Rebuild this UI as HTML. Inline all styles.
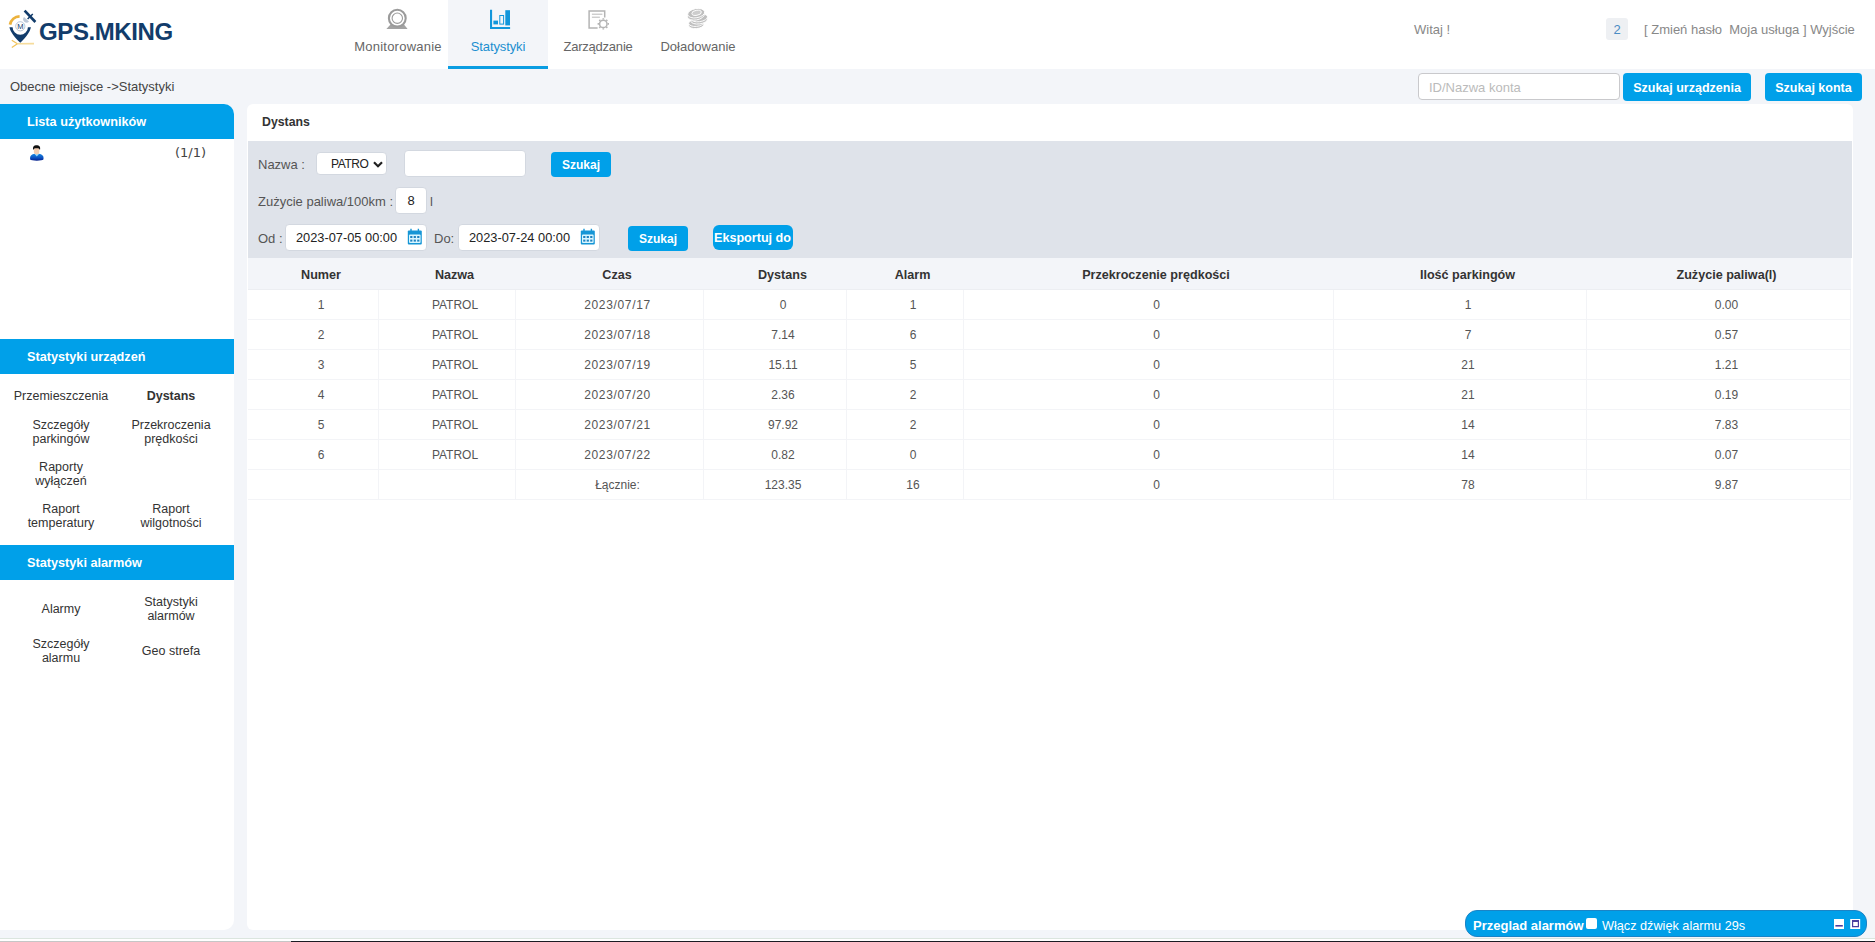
<!DOCTYPE html>
<html lang="pl">
<head>
<meta charset="utf-8">
<title>GPS.MKING - Statystyki</title>
<style>
*{box-sizing:border-box;margin:0;padding:0}
html,body{width:1875px;height:942px;overflow:hidden}
body{background:#f3f5f9;font-family:"Liberation Sans",sans-serif;font-size:13px;color:#333;position:relative}
.abs{position:absolute}
#header{position:absolute;left:0;top:0;width:1875px;height:69px;background:#fff}
.nav{position:absolute;top:0;height:69px;text-align:center;color:#666;font-size:13px}
.nav span{position:absolute;left:0;right:0;top:39px;line-height:16px}
.nav.on{background:#f3f5f9;border-bottom:3px solid #0a9de2;color:#1b8fd0}
.nav svg{position:absolute;top:6px;left:50%;margin-left:-13px}
#crumb{position:absolute;left:10px;top:79px;line-height:16px;font-size:13px;color:#444}
.btn{position:absolute;background:#00a0e9;color:#fff;font-weight:bold;border-radius:4px;text-align:center;font-size:12px}
#left{position:absolute;left:0;top:104px;width:234px;height:826px;background:#fff;border-radius:0 10px 10px 0;overflow:hidden}
.lh{position:absolute;left:0;width:234px;height:35px;background:#00a0e9;color:#fff;font-weight:bold;font-size:12.7px;line-height:37px;padding-left:27px}
.li{position:absolute;margin-top:1px;width:110px;text-align:center;font-size:12.5px;line-height:13.5px;color:#333}
#main{position:absolute;left:247px;top:104px;width:1606px;height:826px;background:#fff;border-radius:6px;overflow:hidden}
#filter{position:absolute;left:1px;top:37px;width:1604px;height:117px;background:#dfe3ea}
.lbl{position:absolute;font-size:13px;color:#555;line-height:16px}
.inp{position:absolute;background:#fff;border:1px solid #d3d8e0;border-radius:4px;font-size:12px;color:#222;line-height:22px}
table{position:absolute;left:1px;top:154px;width:1603px;border-collapse:separate;border-spacing:0;table-layout:fixed;font-size:12px;color:#555}
th{height:32px;padding:2px 0 0 16px;background:#f3f5f9;color:#333;font-weight:bold;font-size:12.6px}
td{height:30px;padding-left:16px;text-align:center;border-left:1px solid #f3f4f7;border-bottom:1px solid #f3f4f7}
td:first-child{border-left:0}
td:last-child{border-right:1px solid #f3f4f7}
th{border-bottom:1px solid #eceef2}
td:nth-child(3){letter-spacing:.65px}
tr:last-child td:nth-child(3){letter-spacing:0}
#alarm{position:absolute;left:1465px;top:910px;width:402px;height:27px;background:#00a0e9;border:1px solid #1b84c6;border-radius:12px;color:#fff;font-size:13px;line-height:27px}
</style>
</head>
<body>
<div id="header">
  <svg class="abs" style="left:0;top:0" width="40" height="52" viewBox="0 0 40 52">
    <path d="M19.6 16.3 A10.4 10.4 0 0 0 10 24.6" fill="none" stroke="#ecb23c" stroke-width="2.8"/>
    <path d="M9.4 27.2 L12.6 27.2 A7.3 7.3 0 0 0 27.9 27.2 L30.9 27.2 C30 32 26 37 20.3 42.8 C14.5 37 10.5 32 9.4 27.2Z" fill="#123c6b"/>
    <circle cx="20.3" cy="26.3" r="4.6" fill="#fff" stroke="#8aa0bb" stroke-width="0.6"/>
    <path d="M24.6 10.6 L35.4 22" stroke="#123c6b" stroke-width="2.6"/>
    <path d="M27.6 19 L32.8 14" stroke="#123c6b" stroke-width="1.5"/>
    <path d="M24 17 A3.4 3.4 0 0 0 29 21.6 Z" fill="#bcc8d8"/>
    <path d="M11.8 40.2 L17.4 43.8 L11.8 47.6" stroke="#f0c35a" stroke-width="1.2" fill="none"/>
    <path d="M17.4 43.8 L34 43.6" stroke="#f6dc9c" stroke-width="1.6" fill="none"/>
    <text x="20.3" y="29" font-size="7.5" text-anchor="middle" fill="#123c6b" font-family="Liberation Sans, sans-serif">M</text>
  </svg>
  <div class="abs" style="left:39px;top:18px;font-size:24px;line-height:28px;font-weight:bold;color:#123c6b;letter-spacing:-0.4px">GPS.MKING</div>

  <div class="nav" style="left:348px;width:100px"><span style="letter-spacing:.23px">Monitorowanie</span></div>
  <div class="nav on" style="left:448px;width:100px"><span style="letter-spacing:-.12px">Statystyki</span></div>
  <div class="nav" style="left:548px;width:100px"><span style="letter-spacing:-.22px">Zarządzanie</span></div>
  <div class="nav" style="left:648px;width:100px"><span>Doładowanie</span></div>


  <svg class="abs" style="left:380px;top:0" width="340" height="36" viewBox="380 0 340 36">
    <!-- webcam -->
    <path d="M390.5 24.6 L404 24.6 L407.6 28.9 L386.4 28.9 Z" fill="#a3a3a3"/>
    <circle cx="397.3" cy="18.2" r="8.4" fill="#fff" stroke="#9b9b9b" stroke-width="2.1"/>
    <circle cx="397.3" cy="18.2" r="5.2" fill="none" stroke="#9b9b9b" stroke-width="1.1"/>
    <!-- bar chart -->
    <path d="M490 9.8 h2.1 v17.1 h18 v2.1 h-20.1 Z" fill="#1296db"/>
    <rect x="493.4" y="20.6" width="4.6" height="3.8" fill="#1296db"/>
    <rect x="499.8" y="15.5" width="3.8" height="8.6" fill="none" stroke="#1296db" stroke-width="1"/>
    <rect x="505.3" y="10.2" width="4.7" height="15.2" fill="#1296db"/>
    <!-- document + gear -->
    <path d="M597.6 27.9 L589.1 27.9 L589.1 10.9 L604.7 10.9 L604.7 17.6" fill="none" stroke="#b4b4b4" stroke-width="1.5"/>
    <path d="M591.9 14.2 H602.4 M591.9 17.2 H599.9" stroke="#b9b9b9" stroke-width="1" fill="none"/>
    <circle cx="603.3" cy="23.9" r="3.7" fill="none" stroke="#b4b4b4" stroke-width="1.5"/>
    <g stroke="#b4b4b4" stroke-width="1.7">
      <path d="M603.3 19.6 V18.2 M603.3 28.2 V29.6 M599 23.9 H597.6 M607.6 23.9 H609 M600.3 20.9 L599.3 19.9 M606.3 26.9 L607.3 27.9 M606.3 20.9 L607.3 19.9 M600.3 26.9 L599.3 27.9"/>
    </g>
    <!-- coins -->
    <g fill="#bfbfbf" stroke="#fff" stroke-width="0.9">
      <ellipse cx="696.2" cy="25" rx="7.6" ry="3.6" transform="rotate(-5 696.2 25)"/>
      <ellipse cx="696.2" cy="22.8" rx="7.6" ry="3.6" transform="rotate(-5 696.2 22.8)"/>
      <ellipse cx="699.2" cy="20" rx="8.4" ry="3.9" transform="rotate(-8 699.2 20)"/>
      <ellipse cx="699.2" cy="17.8" rx="8.4" ry="3.9" transform="rotate(-8 699.2 17.8)"/>
      <ellipse cx="695.8" cy="15.4" rx="8.6" ry="4.6" transform="rotate(-10 695.8 15.4)"/>
      <ellipse cx="696.2" cy="13.2" rx="8.6" ry="4.6" transform="rotate(-10 696.2 13.2)"/>
      <ellipse cx="696.6" cy="12.8" rx="4.8" ry="2.5" transform="rotate(-10 696.6 12.8)" fill="#cdcdcd"/>
    </g>
  </svg>
  <div class="abs" style="left:1414px;top:22px;line-height:16px;color:#888;font-size:13px">Witaj !</div>
  <div class="abs" style="left:1606px;top:18px;width:22px;height:22px;background:#eef0f3;border-radius:3px;color:#4a8cc4;text-align:center;line-height:24px;font-size:13px">2</div>
  <div class="abs" style="left:1644px;top:22px;line-height:16px;color:#888;font-size:13px;white-space:pre">[ Zmień hasło  Moja usługa ] Wyjście</div>
</div>

<div id="crumb">Obecne miejsce -&gt;Statystyki</div>
<div class="inp" style="left:1418px;top:73px;width:202px;height:27px;border-color:#c9c9cc;color:#bbb;font-size:13px;line-height:27px;padding-left:10px">ID/Nazwa konta</div>
<div class="btn" style="left:1623px;top:73px;width:128px;height:28px;line-height:30px;font-size:12.5px">Szukaj urządzenia</div>
<div class="btn" style="left:1765px;top:73px;width:97px;height:28px;line-height:30px;font-size:12.5px">Szukaj konta</div>

<div id="left">
  <div class="lh" style="top:0">Lista użytkowników</div>
  <svg class="abs" style="left:28px;top:39px" width="18" height="20" viewBox="28 143 18 20">
    <defs><linearGradient id="ub" x1="0" y1="0" x2="0" y2="1"><stop offset="0" stop-color="#1a86e0"/><stop offset="0.6" stop-color="#0b50c0"/><stop offset="1" stop-color="#06208c"/></linearGradient></defs>
    <path d="M30.2 159.6 C29.4 155.6 31.6 153.8 36.8 153.8 C42 153.8 44.2 155.6 43.4 159.6 C42.6 161 31 161 30.2 159.6Z" fill="url(#ub)"/>
    <path d="M34.6 154 L36.8 156.6 L39 154 Z" fill="#8fd8ff"/>
    <ellipse cx="36.6" cy="151" rx="2.8" ry="3.5" fill="#f3cdb0"/>
    <path d="M33.2 150 C32.4 146.6 34.2 145.2 36.6 145.2 C39 145.2 40.8 146.6 40 150 C39.4 148.6 38.4 148.2 36.6 148.2 C34.8 148.2 33.8 148.6 33.2 150Z" fill="#111"/>
  </svg>
  <div class="abs" style="left:175px;top:41px;font-size:13px;line-height:16px;color:#444;font-family:'DejaVu Sans',sans-serif">(1/1)</div>
  <div class="lh" style="top:235px">Statystyki urządzeń</div>
  <div class="li" style="left:6px;top:285px">Przemieszczenia</div>
  <div class="li" style="left:116px;top:285px;font-weight:bold">Dystans</div>
  <div class="li" style="left:6px;top:314px">Szczegóły<br>parkingów</div>
  <div class="li" style="left:116px;top:314px">Przekroczenia<br>prędkości</div>
  <div class="li" style="left:6px;top:356px">Raporty<br>wyłączeń</div>
  <div class="li" style="left:6px;top:398px">Raport<br>temperatury</div>
  <div class="li" style="left:116px;top:398px">Raport<br>wilgotności</div>
  <div class="lh" style="top:441px">Statystyki alarmów</div>
  <div class="li" style="left:6px;top:498px">Alarmy</div>
  <div class="li" style="left:116px;top:491px">Statystyki<br>alarmów</div>
  <div class="li" style="left:6px;top:533px">Szczegóły<br>alarmu</div>
  <div class="li" style="left:116px;top:540px">Geo strefa</div>
</div>

<div id="main">
  <div class="abs" style="left:15px;top:10px;font-weight:bold;font-size:12.3px;line-height:16px;color:#333">Dystans</div>
  <div id="filter">
    <div class="lbl" style="left:10px;top:16px">Nazwa :</div>
    <div class="inp" style="left:68px;top:11px;width:71px;height:23px;line-height:22px;padding-left:14px;font-size:12px;letter-spacing:-0.4px">PATRO<svg class="abs" style="left:56px;top:8px" width="10" height="7" viewBox="0 0 10 7"><path d="M1 1.2 L5 5.2 L9 1.2" fill="none" stroke="#222" stroke-width="2.2"/></svg></div>
    <div class="inp" style="left:156px;top:9px;width:122px;height:27px"></div>
    <div class="btn" style="left:303px;top:11px;width:60px;height:25px;line-height:26px">Szukaj</div>
    <div class="lbl" style="left:10px;top:53px">Zużycie paliwa/100km :</div>
    <div class="inp" style="left:147px;top:46px;width:32px;height:27px;line-height:25px;text-align:center;font-size:13px">8</div>
    <div class="lbl" style="left:182px;top:53px">l</div>
    <div class="lbl" style="left:10px;top:90px">Od :</div>
    <div class="inp" style="left:37px;top:83px;width:142px;height:27px;line-height:26px;padding-left:10px;font-size:12.8px">2023-07-05 00:00</div>
    <div class="lbl" style="left:186px;top:90px">Do:</div>
    <div class="inp" style="left:210px;top:83px;width:142px;height:27px;line-height:26px;padding-left:10px;font-size:12.8px">2023-07-24 00:00</div>
    <svg class="abs" style="left:159px;top:87px" width="16" height="18" viewBox="0 0 16 18"><path d="M4 0.8 V4 M11.4 0.8 V4" stroke="#1696d6" stroke-width="1.4"/><rect x="0.8" y="2.6" width="14" height="13.8" rx="1" fill="#1696d6"/><rect x="2" y="6.6" width="11.6" height="8.4" rx="1" fill="#d9f6ff"/><g fill="#1e82c0"><rect x="3.2" y="8" width="2.2" height="2"/><rect x="6.7" y="8" width="2.2" height="2"/><rect x="10.2" y="8" width="2.2" height="2"/><rect x="3.2" y="11.6" width="2.2" height="2"/><rect x="6.7" y="11.6" width="2.2" height="2"/><rect x="10.2" y="11.6" width="2.2" height="2"/></g></svg>
    <svg class="abs" style="left:332px;top:87px" width="16" height="18" viewBox="0 0 16 18"><path d="M4 0.8 V4 M11.4 0.8 V4" stroke="#1696d6" stroke-width="1.4"/><rect x="0.8" y="2.6" width="14" height="13.8" rx="1" fill="#1696d6"/><rect x="2" y="6.6" width="11.6" height="8.4" rx="1" fill="#d9f6ff"/><g fill="#1e82c0"><rect x="3.2" y="8" width="2.2" height="2"/><rect x="6.7" y="8" width="2.2" height="2"/><rect x="10.2" y="8" width="2.2" height="2"/><rect x="3.2" y="11.6" width="2.2" height="2"/><rect x="6.7" y="11.6" width="2.2" height="2"/><rect x="10.2" y="11.6" width="2.2" height="2"/></g></svg>
    <div class="btn" style="left:380px;top:85px;width:60px;height:25px;line-height:26px">Szukaj</div>
    <div class="btn" style="left:465px;top:84px;width:80px;height:25px;line-height:26px;font-size:12.6px;border-radius:6px;white-space:nowrap;text-indent:-1px">Eksportuj do</div>
  </div>
  <table>
    <colgroup><col style="width:130px"><col style="width:137px"><col style="width:188px"><col style="width:143px"><col style="width:117px"><col style="width:370px"><col style="width:253px"><col style="width:265px"></colgroup>
    <tr><th>Numer</th><th>Nazwa</th><th>Czas</th><th>Dystans</th><th>Alarm</th><th>Przekroczenie prędkości</th><th>Ilość parkingów</th><th>Zużycie paliwa(l)</th></tr>
    <tr><td>1</td><td>PATROL</td><td>2023/07/17</td><td>0</td><td>1</td><td>0</td><td>1</td><td>0.00</td></tr>
    <tr><td>2</td><td>PATROL</td><td>2023/07/18</td><td>7.14</td><td>6</td><td>0</td><td>7</td><td>0.57</td></tr>
    <tr><td>3</td><td>PATROL</td><td>2023/07/19</td><td>15.11</td><td>5</td><td>0</td><td>21</td><td>1.21</td></tr>
    <tr><td>4</td><td>PATROL</td><td>2023/07/20</td><td>2.36</td><td>2</td><td>0</td><td>21</td><td>0.19</td></tr>
    <tr><td>5</td><td>PATROL</td><td>2023/07/21</td><td>97.92</td><td>2</td><td>0</td><td>14</td><td>7.83</td></tr>
    <tr><td>6</td><td>PATROL</td><td>2023/07/22</td><td>0.82</td><td>0</td><td>0</td><td>14</td><td>0.07</td></tr>
    <tr><td></td><td></td><td>Łącznie:</td><td>123.35</td><td>16</td><td>0</td><td>78</td><td>9.87</td></tr>
  </table>
</div>

<div id="alarm">
  <span class="abs" style="left:7px;top:1px;font-weight:bold;font-size:13px">Przeglad alarmów</span>
  <span class="abs" style="left:120px;top:7px;width:11px;height:11px;background:#fff;border-radius:2px"></span>
  <span class="abs" style="left:136px;top:2px;font-size:12.7px">Włącz dźwięk alarmu 29s</span>
  <svg class="abs" style="left:368px;top:8px" width="28" height="11" viewBox="0 0 28 11">
    <rect x="0" y="0" width="10" height="10" fill="#fff"/><rect x="1.4" y="6" width="7.4" height="1.6" fill="#4a3f9f"/>
    <rect x="16.2" y="0" width="10" height="10" fill="#fff"/><path d="M18 1 h7 v7.2 h-7 Z M19.2 3 v4 h4.6 v-4 Z" fill="#4a3f9f" fill-rule="evenodd"/>
  </svg>
</div>
<div class="abs" style="left:0;top:938px;width:1875px;height:1px;background:#dbe5de"></div>
<div class="abs" style="left:0;top:939px;width:1875px;height:2px;background:#fff"></div>
<div class="abs" style="left:0;top:941px;width:1875px;height:1px;background:#c6c6c6"></div>
<div class="abs" style="left:291px;top:941px;width:1584px;height:1px;background:#1c1c24"></div>
</body>
</html>
